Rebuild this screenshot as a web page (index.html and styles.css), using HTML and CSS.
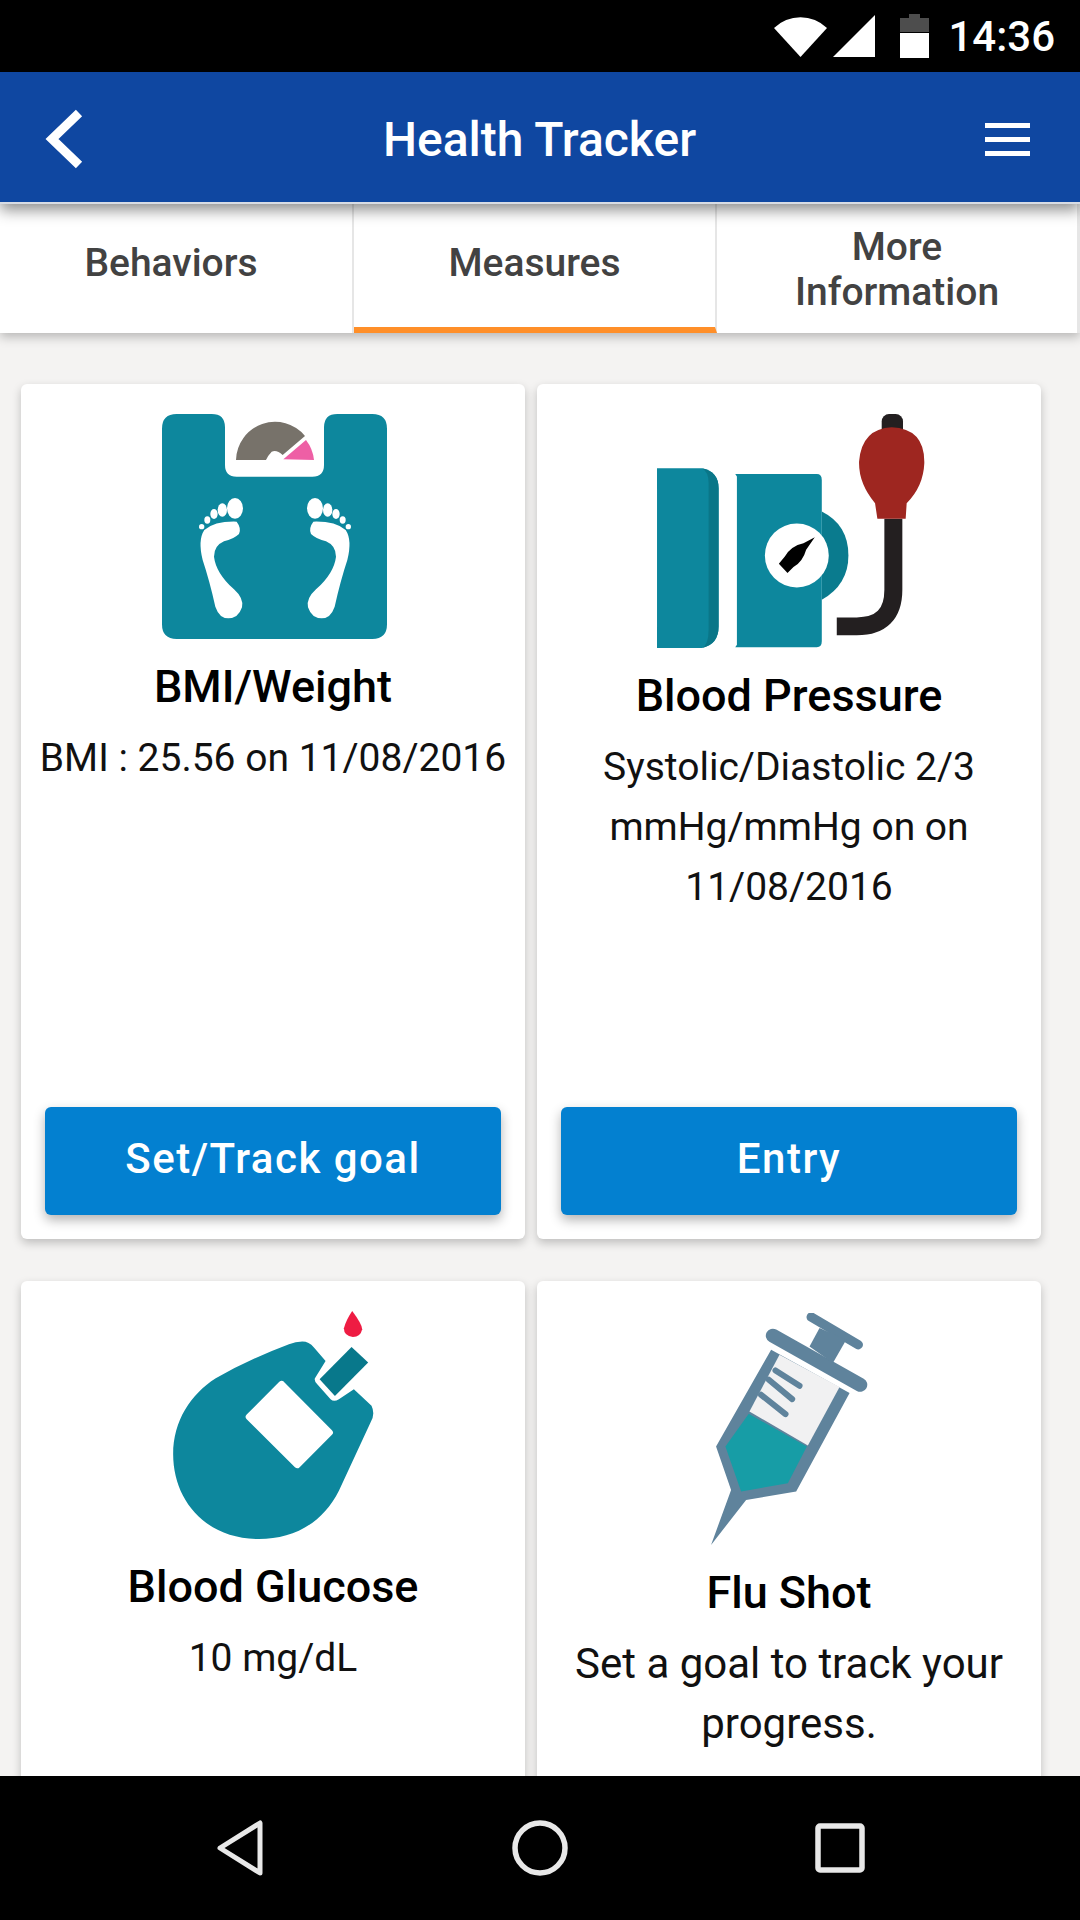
FILE: index.html
```html
<!DOCTYPE html>
<html lang="en">
<head>
  <meta charset="UTF-8" />
  <meta name="viewport" content="width=device-width, initial-scale=1.0" />
  <title>Health Tracker</title>
  <link rel="stylesheet" href="styles.css">
</head>
<body>
  <div class="phone">
    <div class="status-bar">
      <svg class="wifi" viewBox="0 0 53 42"><path d="M0 13 A38 38 0 0 1 53 13 L26.5 42 Z" fill="#fff"/></svg>
      <svg class="signal" viewBox="0 0 42 42"><path d="M42 0 V42 H0 Z" fill="#fff"/></svg>
      <svg class="battery" viewBox="0 0 29 44">
        <path d="M9 0 H20 V4 H29 V18 H0 V4 H9 Z" fill="#4d4d4d"/>
        <path d="M0 19 H29 V44 H0 Z" fill="#fff"/>
      </svg>
      <span class="clock">14:36</span>
    </div>

    <header class="app-bar">
      <svg class="back" viewBox="0 0 40 62"><path d="M34 5 L7 31 L34 57" fill="none" stroke="#fff" stroke-width="9"/></svg>
      <h1 class="app-title">Health Tracker</h1>
      <div class="menu"><span></span><span></span><span></span></div>
    </header>

    <nav class="tabs">
      <div class="tab tab-first">Behaviors</div>
      <div class="tab tab-active">Measures</div>
      <div class="tab tab-last">More<br>Information</div>
    </nav>

    <main class="content">
      <div class="card-grid">
        <section class="card">
          <svg class="icon icon-scale" viewBox="66 42 675 675">
            <path d="M110 42 H215 Q255 42 255 82 V195 Q255 230 290 230 H517 Q552 230 552 195 V82 Q552 42 592 42 H697 Q741 42 741 86 V673 Q741 717 697 717 H110 Q66 717 66 673 V86 Q66 42 110 42 Z" fill="#0d879d"/>
            <path d="M288 180 A117 117 0 0 1 495 108 L428 165 Q410 148 395 155 Q385 165 378 180 Z" fill="#77726a"/>
            <path d="M430 178 L498 120 A117 117 0 0 1 522 180 Z" fill="#ee5fa5"/>
            <g id="foot" fill="#fff">
              <ellipse cx="285" cy="325" rx="24" ry="31"/>
              <ellipse cx="247" cy="330" rx="14" ry="20"/>
              <ellipse cx="222" cy="342" rx="11" ry="15"/>
              <ellipse cx="202" cy="360" rx="9" ry="11"/>
              <ellipse cx="185" cy="380" rx="8" ry="8"/>
              <path d="M290 365 Q305 385 297 402 Q280 418 252 424 Q222 437 222 470 Q228 520 282 568 Q312 595 306 622 Q295 655 265 655 Q238 655 226 620 Q208 540 188 480 Q173 420 193 390 Q225 363 290 365 Z"/>
            </g>
            <use href="#foot" transform="matrix(-1 0 0 1 810 0)"/>
          </svg>
          <h2 class="card-title">BMI/Weight</h2>
          <p class="card-text">BMI : 25.56 on 11/08/2016</p>
          <button class="card-button">Set/Track goal</button>
        </section>

        <section class="card">
          <svg class="icon icon-pressure" viewBox="50 42 805 703">
            <path d="M50 205 H185 Q235 215 235 265 V680 Q235 735 185 745 H50 Z" fill="#0d879d"/>
            <path d="M185 205 Q235 215 235 265 V680 Q235 735 185 745 Q205 735 205 690 V250 Q205 215 185 205 Z" fill="#0a7688"/>
            <path d="M545 335 Q625 375 625 467 Q625 555 545 600 Z" fill="#0a7b8e"/>
            <path d="M285 222 H530 Q545 222 545 240 V725 Q545 743 530 743 H285 L290 735 V230 Z" fill="#0d879d"/>
            <circle cx="470" cy="467" r="96" fill="#fff"/>
            <path d="M524 412 L498 450 Q488 486 460 502 L442 520 L416 492 L434 470 Q452 438 490 430 Z" fill="#000"/>
            <rect x="725" y="42" width="64" height="70" rx="22" fill="#231f20"/>
            <path d="M760 357 V570 Q760 680 650 680 H590" fill="none" stroke="#231f20" stroke-width="54"/>
            <path d="M755 82 Q855 86 853 190 Q850 260 800 310 L797 357 H712 L705 310 Q655 250 657 185 Q665 86 755 82 Z" fill="#9e2620"/>
          </svg>
          <h2 class="card-title">Blood Pressure</h2>
          <p class="card-text">Systolic/Diastolic 2/3 mmHg/mmHg on on 11/08/2016</p>
          <button class="card-button">Entry</button>
        </section>

        <section class="card">
          <svg class="icon icon-glucose" viewBox="72 60 603 685">
            <path d="M460 152 Q480 152 495 170 L530 210 L498 262 Q495 270 505 280 L545 325 Q555 335 570 325 L615 295 L668 345 Q680 370 665 395 L570 600 C520 700 430 745 330 745 C170 745 72 630 72 490 C72 390 125 310 200 262 Q300 205 420 160 Q440 152 460 152 Z" fill="#0d879d"/>
            <path d="M398 280 L542 425 L445 522 L300 378 Z" fill="#fff" stroke="#fff" stroke-width="20" stroke-linejoin="round"/>
            <path d="M608 168 L658 215 L558 315 L512 265 Z" fill="#08788b"/>
            <path d="M610 60 Q640 100 640 115 Q635 138 612 138 Q585 135 585 112 Q590 90 610 60 Z" fill="#ee1c43"/>
          </svg>
          <h2 class="card-title">Blood Glucose</h2>
          <p class="card-text">10 mg/dL</p>
        </section>

        <section class="card">
          <svg class="icon icon-flu" viewBox="65 40 470 695">
            <g stroke="#5f839c" fill="none" stroke-linecap="round">
              <path d="M365 52 L506 135" stroke-width="28"/>
              <path d="M250 108 L512 255" stroke-width="42"/>
            </g>
            <path d="M390 85 L360 140 L430 190 L470 120 Z" fill="#5f839c"/>
            <path d="M245 150 L480 280 L320 575 L170 600 L65 735 L125 570 L80 440 Z" fill="#5f839c"/>
            <path d="M270 165 L450 262 L355 437 L180 335 Z" fill="#f1f1f2"/>
            <path d="M178 342 L352 440 L295 550 L155 575 L108 440 Z" fill="#179da6"/>
            <g stroke="#5f839c" stroke-width="18" stroke-linecap="round">
              <path d="M258 212 L330 258"/>
              <path d="M238 240 L308 298"/>
              <path d="M215 285 L288 343"/>
            </g>
          </svg>
          <h2 class="card-title">Flu Shot</h2>
          <p class="card-text card-text-large">Set a goal to track your progress.</p>
        </section>
      </div>
    </main>

    <footer class="nav-bar">
      <svg class="nav-back" viewBox="0 0 46 56"><path d="M43 3 V53 L3 28 Z" fill="none" stroke="#e8e8e8" stroke-width="5" stroke-linejoin="round"/></svg>
      <svg class="nav-home" viewBox="0 0 56 56"><circle cx="28" cy="28" r="25" fill="none" stroke="#e8e8e8" stroke-width="5.5"/></svg>
      <svg class="nav-recent" viewBox="0 0 50 50"><rect x="3" y="3" width="44" height="44" rx="2" fill="none" stroke="#e8e8e8" stroke-width="5.5"/></svg>
    </footer>
  </div>
</body>
</html>
```
FILE: styles.css
```css
* {
  box-sizing: border-box;
}

body {
  margin: 0;
  font-family: Roboto, sans-serif;
  background: #f4f3f2;
}

.phone {
  display: flex;
  flex-direction: column;
  width: 1080px;
  height: 1920px;
  overflow: hidden;
}

.status-bar {
  display: flex;
  align-items: center;
  flex-shrink: 0;
  height: 72px;
  padding-right: 25px;
  background: #000;
  justify-content: flex-end;
}

.wifi {
  width: 53px;
  height: 42px;
  margin-right: 6px;
}

.signal {
  width: 42px;
  height: 42px;
  margin-right: 25px;
}

.battery {
  width: 29px;
  height: 44px;
  margin-right: 19px;
}

.clock {
  color: #fff;
  font-size: 42px;
  font-weight: 500;
}

.app-bar {
  position: relative;
  z-index: 2;
  display: grid;
  grid-template-columns: 1fr auto 1fr;
  align-items: center;
  flex-shrink: 0;
  height: 132px;
  padding: 4px 46px 0 45px;
  background: #0f47a1;
  border-bottom: 2px solid #d8dce4;
  box-shadow: 0 6px 14px rgba(0,0,0,0.45);
}

.back {
  width: 40px;
  height: 62px;
}

.app-title {
  margin: 0;
  color: #fff;
  font-size: 48px;
  font-weight: 500;
}

.menu {
  display: flex;
  flex-direction: column;
  justify-self: end;
  gap: 9px;
  width: 45px;
  margin-right: 4px;
}

.menu span {
  height: 5px;
  background: #fff;
}

.tabs {
  position: relative;
  z-index: 1;
  display: flex;
  flex-shrink: 0;
  height: 129px;
  background: #fff;
  box-shadow: 0 4px 10px rgba(0,0,0,0.25);
}

.tab {
  display: flex;
  align-items: center;
  justify-content: center;
  color: #424242;
  font-size: 39px;
  font-weight: 500;
  line-height: 45px;
  text-align: center;
  border-right: 2px solid #e6e6e6;
}

.tab-first {
  width: 354px;
  padding: 0 10px 10px 0;
}

.tab-active {
  width: 363px;
  padding-bottom: 4px;
  border-bottom: 6px solid #ff8f29;
}

.tab-last {
  flex: 1;
  padding-top: 2px;
  border-right-width: 3px;
}

.content {
  flex: 1;
  overflow: hidden;
  padding: 51px 39px 0 21px;
}

.card-grid {
  display: grid;
  grid-template-columns: 504px 504px;
  grid-auto-rows: 855px;
  column-gap: 12px;
  row-gap: 42px;
}

.card {
  display: flex;
  flex-direction: column;
  align-items: center;
  padding: 30px 16px 24px;
  background: #fff;
  border-radius: 6px;
  box-shadow: 0 4px 10px rgba(0,0,0,0.22);
}

.icon {
  flex-shrink: 0;
}

.icon-scale {
  width: 225px;
  height: 225px;
  margin-left: 2px;
}

.icon-pressure {
  width: 268px;
  height: 234px;
  margin-left: 3px;
}

.icon-glucose {
  width: 201px;
  height: 228px;
}

.icon-flu {
  width: 157px;
  height: 232px;
  margin-top: 2px;
}

.card-title {
  margin: 24px 0 17px;
  color: #000;
  font-size: 45px;
  font-weight: 500;
  line-height: 48px;
  text-align: center;
}

.card-text {
  margin: 0;
  color: #111;
  font-size: 39px;
  line-height: 60px;
  text-align: center;
}

.card-text-large {
  font-size: 42px;
}

.card-button {
  flex-shrink: 0;
  width: 456px;
  height: 108px;
  margin-top: auto;
  padding-bottom: 6px;
  color: #fff;
  font-family: Roboto, sans-serif;
  font-size: 42px;
  font-weight: 500;
  letter-spacing: 1.5px;
  background: #0380d0;
  border: none;
  border-radius: 6px;
  box-shadow: 0 5px 12px rgba(0,0,0,0.3);
}

.nav-bar {
  position: relative;
  z-index: 3;
  flex-shrink: 0;
  height: 144px;
  background: #000;
  display: flex;
  align-items: center;
}

.nav-back {
  width: 46px;
  height: 56px;
  margin-left: 217px;
}

.nav-home {
  width: 56px;
  height: 56px;
  margin-left: 249px;
}

.nav-recent {
  width: 50px;
  height: 50px;
  margin-left: 247px;
}
```
